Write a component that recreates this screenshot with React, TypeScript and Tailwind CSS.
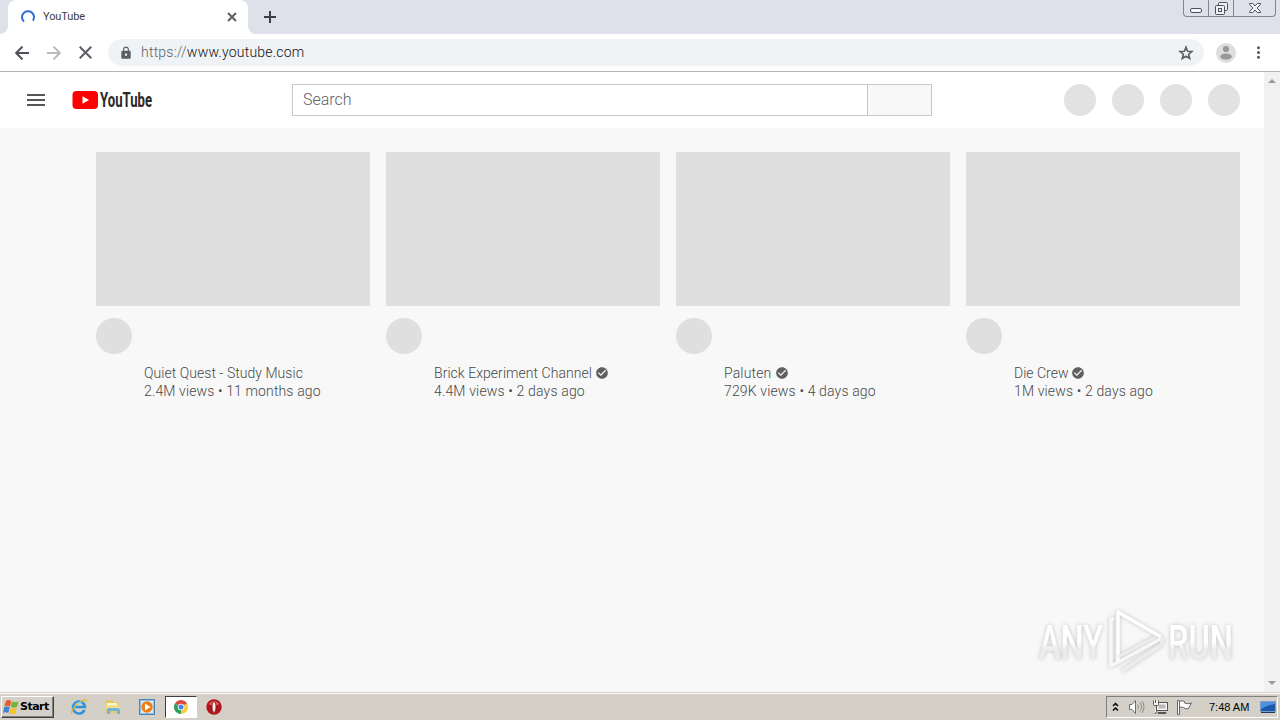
import {MdCheckCircle, MdLock, MdMenu, MdMoreVert} from "react-icons/md";

interface VideoModel {
    channel: string,
    channelClass: string,
    meta: string,
    metaClass: string,
    verified: boolean
}

const videos: VideoModel[] = [
    {channel: "Quiet Quest - Study Music", channelClass: "tracking-[0.04px]", meta: "2.4M views • 11 months ago", metaClass: "tracking-[0.13px]", verified: false},
    {channel: "Brick Experiment Channel", channelClass: "w-[158px] tracking-[0.04px]", meta: "4.4M views • 2 days ago", metaClass: "tracking-[0.16px]", verified: true},
    {channel: "Paluten", channelClass: "w-[48px] tracking-[0.15px]", meta: "729K views • 4 days ago", metaClass: "tracking-[0.15px]", verified: true},
    {channel: "Die Crew", channelClass: "w-[54px]", meta: "1M views • 2 days ago", metaClass: "tracking-[0.14px]", verified: true},
];

function LineIcon({d, size, className}: { d: string, size: number, className: string }) {
    return (
        <svg width={size} height={size} viewBox={`0 0 ${size} ${size}`} fill="none" stroke="currentColor"
             strokeWidth="2" className={className}>
            <path d={d}/>
        </svg>
    );
}

function WindowButtons() {
    return (
        <div className="flex h-[17px] w-[93px] rounded-b-[4px] border border-t-0 border-[#80868f] text-[#4c525b]">
            <div className="flex w-[25px] justify-center border-r border-[#80868f]">
                <svg width="14" height="16" viewBox="0 0 14 16" fill="none" stroke="currentColor">
                    <rect x="1.5" y="8.5" width="11" height="4" rx="1.5" fill="#f5f6f8"/>
                </svg>
            </div>
            <div className="flex w-[25px] justify-center border-r border-[#80868f]">
                <svg width="15" height="16" viewBox="0 0 15 16" fill="#eef0f3" stroke="currentColor">
                    <rect x="4.5" y="2.5" width="9" height="8" rx="1"/>
                    <rect x="1.5" y="5.5" width="9" height="9" rx="1"/>
                    <rect x="4.5" y="8.5" width="3" height="3"/>
                </svg>
            </div>
            <div className="flex flex-1 justify-center">
                <svg width="14" height="16" viewBox="0 0 14 16" fill="#f5f6f8" stroke="currentColor">
                    <path d="M1.5 3.5h3.2L7 6l2.3-2.5h3.2v1L9 8l3.5 3.5v1H9.3L7 10l-2.3 2.5H1.5v-1L5 8 1.5 4.5z"/>
                </svg>
            </div>
        </div>
    );
}

function TabStrip() {
    return (
        <div className="flex h-[34px] bg-[#dee1e9]">
            <div className="w-2 bg-white">
                <div className="h-full rounded-br-lg bg-[#dee1e9]"></div>
            </div>
            <div className="flex w-[240px] items-center rounded-t-lg bg-white pl-[13px] pr-[11px]">
                <svg width="14" height="14" viewBox="0 0 14 14" fill="none" stroke="#2f6fda" strokeWidth="2">
                    <path d="M3 11.6A6 6 0 1 1 11.9 10.6"/>
                </svg>
                <span className="ml-2 flex-1 pt-px text-[11px] tracking-[-0.1px] text-[#3c4043]">YouTube</span>
                <LineIcon size={10} d="M1 1l8 8M9 1L1 9" className="text-[#5c6065]"/>
            </div>
            <div className="w-2 bg-white">
                <div className="h-full rounded-bl-lg bg-[#dee1e9]"></div>
            </div>
            <div className="flex flex-1 items-center pl-2">
                <LineIcon size={12} d="M6 0v12M0 6h12" className="text-[#3a3e44]"/>
            </div>
            <div className="pr-1">
                <WindowButtons/>
            </div>
        </div>
    );
}

function Toolbar() {
    return (
        <div className="flex h-[38px] items-center border-b border-[#b3b3b3] bg-white text-[#5a5e63]">
            <LineIcon size={14} d="M14 7H1.5M7.500 .6L1.200 7l6.300 6.400" className="ml-[15px] text-[#4c4f54]"/>
            <LineIcon size={14} d="M0 7h12.500M6.500 .6L12.800 7l-6.300 6.400" className="ml-[18px] text-[#b9bbbd]"/>
            <LineIcon size={13} d="M.7 .7l11.600 11.600M12.300 .7L.7 12.300" className="ml-[18px]"/>
            <div className="ml-4 flex h-[27px] w-[1096px] items-center rounded-full bg-[#f0f3f6] pl-[11px] pr-[10px]">
                <MdLock size={14}/>
                <div className="ml-2 flex-1 text-[14px] font-light tracking-[0.22px] text-[#101114]">
                    <span className="text-[#5a5f65]">https://</span>www.youtube.com
                </div>
                <svg width="16" height="16" viewBox="0 0 16 16" fill="none" stroke="currentColor" strokeWidth="1.600">
                    <path d="M8 2.200L9.600 6.200 13.900 6.500 10.600 9.300 11.700 13.500 8 11.200 4.300 13.500 5.400 9.300 2.100 6.500 6.400 6.200z"/>
                </svg>
            </div>
            <svg width="20" height="20" viewBox="0 0 20 20" className="ml-3" fill="#989898">
                <circle cx="10" cy="10" r="10" fill="#dedede"/>
                <circle cx="10" cy="6" r="3.1"/>
                <ellipse cx="10" cy="13.6" rx="5.8" ry="3"/>
            </svg>
            <MdMoreVert size={19} className="ml-[13px]"/>
        </div>
    );
}

function YouTubeLogo() {
    return (
        <svg width="110" height="24" viewBox="0 -2 110 24">
            <rect x="0.5" y="1" width="25.5" height="18" rx="4" fill="#ff0000"/>
            <path d="M10.5 6.2v7.6l6.6-3.8z" fill="#fff"/>
            <text x="28" y="17" textLength="52" lengthAdjust="spacingAndGlyphs" fontSize="20" fontWeight="700"
                  fill="#282828" className="font-['Roboto',sans-serif]">YouTube</text>
        </svg>
    );
}

function Masthead() {
    return (
        <div className="flex h-14 items-center bg-white pl-6 pr-6">
            <MdMenu size={24} className="text-[#555]"/>
            <div className="ml-6 w-[220px]">
                <YouTubeLogo/>
            </div>
            <div className="flex h-8 w-[640px] border border-[#c8c8c8]">
                <div className="flex-1 pl-[10px] text-[16px] font-light leading-[30px] text-[#606060]">Search</div>
                <div className="w-16 border-l border-[#c8c8c8] bg-[#f8f8f8]"></div>
            </div>
            <div className="ml-auto flex gap-4">
                {[0, 1, 2, 3].map((i) => (
                    <div key={i} className="h-8 w-8 rounded-full bg-[#e2e2e2]"></div>
                ))}
            </div>
        </div>
    );
}

function VideoCard({video}: { video: VideoModel }) {
    return (
        <div className="w-[274px]">
            <div className="h-[154px] bg-[#dfdfdf]"></div>
            <div className="mt-3 h-9 w-9 rounded-full bg-[#dfdfdf]"></div>
            <div className="mt-[10px] whitespace-nowrap pl-12 text-[14px] font-light leading-[18px] text-[#484848]">
                <div className="flex items-center">
                    <div className={video.channelClass}>{video.channel}</div>
                    {video.verified && <MdCheckCircle size={14} className="ml-[3px] text-[#606060]"/>}
                </div>
                <div className={video.metaClass}>{video.meta}</div>
            </div>
        </div>
    );
}

function Watermark() {
    return (
        <svg width="204" height="70" viewBox="0 0 204 70" className="absolute bottom-[15px] right-[41px] overflow-visible drop-shadow-[0_0_2px_rgba(0,0,0,0.22)]">
            <defs>
                <linearGradient id="fade" x1="0" y1="0" x2="0" y2="1">
                    <stop offset="0.5" stopColor="#fff"/>
                    <stop offset="0.62" stopColor="#ececec"/>
                </linearGradient>
            </defs>
            <g fill="url(#fade)" fontSize="48" fontWeight="500" className="font-['Roboto',sans-serif]">
                <text x="4" y="52" textLength="64" lengthAdjust="spacingAndGlyphs">ANY</text>
                <text x="133" y="52" textLength="65" lengthAdjust="spacingAndGlyphs">RUN</text>
            </g>
            <g fill="none" stroke="#fff" strokeWidth="3.5" strokeLinejoin="round">
                <path d="M83 55V5l43 25"/>
                <path d="M79 12h-3v47l51-28" stroke="#f7f7f7"/>
                <path d="M83 50l38-20M87 64l40-27V30" stroke="#ececec"/>
            </g>
        </svg>
    );
}

function Scrollbar() {
    return (
        <div className="flex w-4 flex-col justify-between bg-[#f1f1f1] py-[6px]">
            <svg width="16" height="6" viewBox="0 0 16 6"><path d="M4 5h8L8 1z" fill="#9a9a9a"/></svg>
            <svg width="16" height="6" viewBox="0 0 16 6"><path d="M4 1h8L8 5z" fill="#9a9a9a"/></svg>
        </div>
    );
}

function StartButton() {
    return (
        <div className="flex h-[22px] w-[53px] items-center border border-b-[#404040] border-l-white border-r-[#404040] border-t-white bg-[#d4d0c8] pl-[1px] shadow-[inset_-1px_-1px_0_#808080]">
            <svg width="16" height="16" viewBox="0 0 16 16">
                <path d="M3 2q2-2 5.300 0L7 7.500Q4 6 1.300 7.500z" fill="#e85a2a"/>
                <path d="M9 2.300q3 1.700 6.500 0L14 8q-3 1.600-6.200-.2z" fill="#79b33b"/>
                <path d="M1.200 8.300q3-1.500 5.500 0L5.200 14Q2.500 12.400 0 14z" fill="#3d83d5"/>
                <path d="M7.500 8.700q2.800 1.500 6.200.2L12.300 14.500q-3 1.300-6.200-.3z" fill="#f6c330"/>
            </svg>
            <span className="ml-[1px] pt-[2px] font-['DejaVu_Sans',sans-serif] text-[11px] font-bold tracking-[-0.5px] text-black">Start</span>
        </div>
    );
}

function QuickLaunch() {
    return (
        <div className="flex items-center">
            <svg width="18" height="18" viewBox="0 0 18 18" className="ml-4" fill="none">
                <path d="M14.500 12A6 6 0 1 1 15 9H5" stroke="#2e94da" strokeWidth="2.600"/>
                <path d="M2.500 15.500C-.5 16 4 8 9 4.500s9-4 7-.5" stroke="#e5b93c" strokeWidth="1.300"/>
                <path d="M5 6.500Q8 3.500 12 5" stroke="#8fd2f6"/>
            </svg>
            <svg width="18" height="18" viewBox="0 0 18 18" className="ml-4">
                <path d="M2 3l1-1h5l1 2h5l1 2v9H2z" fill="#e8c765"/>
                <path d="M3 5h10v5H3z" fill="#fff7ce"/>
                <path d="M2 7h13v4H2z" fill="#f2dd8c"/>
                <path d="M3 16v-4q0-2 2-2h8q3 0 3 2v4h-3v-3H6v3z" fill="#6eb6dc"/>
            </svg>
            <svg width="16" height="16" viewBox="0 0 16 16" className="ml-[17px]">
                <rect x="0.500" y="0.500" width="15" height="15" fill="#8dbde5" stroke="#4c84b6"/>
                <rect x="2" y="2" width="12" height="12" fill="#d8ebf8"/>
                <circle cx="8" cy="8" r="5.700" fill="#ef7d16"/>
                <path d="M6 4.500v7L11.500 8z" fill="#fff"/>
            </svg>
            <div className="ml-[10px] flex h-[22px] w-8 items-center justify-center border border-b-white border-l-[#404040] border-r-white border-t-[#404040] bg-white">
                <svg width="14" height="14" viewBox="0 0 14 14">
                    <path d="M7 7L.940 3.500A7 7 0 0 1 13.060 3.500z" fill="#db4a3c"/>
                    <path d="M7 7L.940 3.500A7 7 0 0 0 7 14z" fill="#2b9f5a"/>
                    <path d="M7 7L7 14A7 7 0 0 0 13.060 3.500z" fill="#fbcc3c"/>
                    <circle cx="7" cy="7" r="3.300" fill="#fff"/>
                    <circle cx="7" cy="7" r="2.500" fill="#4584e6"/>
                </svg>
            </div>
            <svg width="16" height="16" viewBox="0 0 16 16" className="ml-[9px]">
                <circle cx="8" cy="8" r="7.700" fill="#b3161c"/>
                <path d="M2.500 5Q8-1 13.500 5 8 8 2.500 5" fill="#e15a5c"/>
                <ellipse cx="8" cy="8" rx="2" ry="5.500" fill="#f9eaea" stroke="#7d0c10" strokeWidth="0.800"/>
            </svg>
        </div>
    );
}

function Tray() {
    return (
        <div className="ml-auto mr-[2px] flex h-[22px] w-[172px] items-center border border-b-white border-l-[#808080] border-r-white border-t-[#808080]">
            <svg width="7" height="10" viewBox="0 0 7 10" className="ml-[5px]" fill="none" stroke="#000" strokeWidth="1.500">
                <path d="M1 4l2.500-2.500L6 4M1 8.500L3.500 6 6 8.500"/>
            </svg>
            <svg width="17" height="16" viewBox="0 0 17 16" className="ml-[9px]" fill="none" stroke="#6c6c6c">
                <path d="M1.500 5.500h2.500l3.500-4v13l-3.500-4H1.500z" fill="#fff"/>
                <path d="M9.500 5.500q2 2.500 0 5M11.800 3.500q3.500 4.500 0 9M14 2q4 6 0 12" stroke="#8b8b8b"/>
            </svg>
            <svg width="17" height="16" viewBox="0 0 17 16" className="ml-[7px]" fill="#f7f7f7" stroke="#555">
                <rect x="4.500" y="3.500" width="11" height="8"/>
                <path d="M6 13.500h8v1H6z"/>
                <path d="M6.500 5.500h7v4h-7z" fill="#b7b7b7" stroke="none"/>
                <path d="M1.500 1.500v4q0 1 1 1h3q1 0 1-1v-4M3.500 1v3M4.500 6.500v6q0 2-2 2"/>
            </svg>
            <svg width="17" height="16" viewBox="0 0 17 16" className="ml-[7px]" fill="#fff" stroke="#666">
                <path d="M1.500 1.500h2v14h-2z"/>
                <path d="M3.500 2.500q3-1.500 5 0v1.500q3 1.500 7 0-2 3-3 5.500-3 1-5-1-2-1-4 0z"/>
            </svg>
            <span className="ml-[16px] whitespace-nowrap pt-px font-['Liberation_Sans',sans-serif] text-[11px] text-black">7:48 AM</span>
            <svg width="16" height="14" viewBox="0 0 16 14" className="ml-auto mr-px">
                <rect x="0.500" y="1.500" width="15" height="10" fill="#1d59ab" stroke="#7b9cc3"/>
                <path d="M1 2h14v2Q7 5 1 9z" fill="#4f91da"/>
                <path d="M1 12h14v1H1z" fill="#203c65"/>
            </svg>
        </div>
    );
}

export default function App() {
    return (
        <div className="flex h-[720px] w-[1280px] flex-col overflow-hidden font-['Roboto',sans-serif]">
            <TabStrip/>
            <Toolbar/>
            <div className="relative flex h-[620px] bg-[#f8f8f8]">
                <div className="flex-1">
                    <Masthead/>
                    <div className="flex gap-4 pl-24 pt-6">
                        {videos.map((video) => <VideoCard key={video.channel} video={video}/>)}
                    </div>
                </div>
                <Scrollbar/>
                <Watermark/>
            </div>
            <div className="flex h-7 items-center border-t border-[#d4d0c8] bg-[#d4d0c8] pl-[1px] shadow-[inset_0_1px_0_#fff]">
                <StartButton/>
                <QuickLaunch/>
                <Tray/>
            </div>
        </div>
    );
}
